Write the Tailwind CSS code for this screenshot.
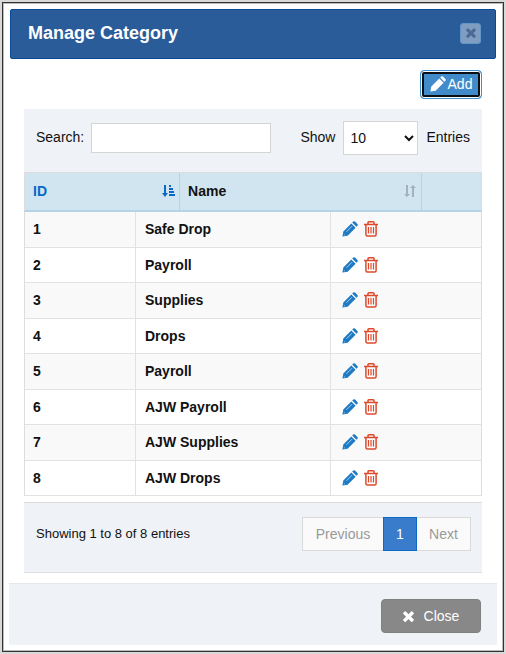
<!DOCTYPE html>
<html lang="en">
<head>
    <meta charset="UTF-8">
    <meta name="viewport" content="width=device-width, initial-scale=1.0">
    <title>Manage Category</title>
    <script src="https://cdn.jsdelivr.net/npm/@tailwindcss/browser@4"></script>
</head>
<body class="min-h-screen bg-[#d9d9d9] p-[2px] font-['Liberation_Sans',Arial,sans-serif] text-sm text-[#111]">

<!-- icon sprite -->
<svg class="hidden">
    <symbol id="pencil" viewBox="0 0 16 16">
        <path d="M.4 15.600l.9-5.200 8-8 4.300 4.300-8 8zM10.200 1.600l1-1q.9-.8 1.800 0l2.400 2.400q.8.9 0 1.800l-1 1z"/>
    </symbol>
    <symbol id="pencil-lined" viewBox="0 0 16 16">
        <path d="M.4 15.600l.9-5.200 8-8 4.300 4.300-8 8zM10.200 1.600l1-1q.9-.8 1.800 0l2.400 2.400q.8.9 0 1.800l-1 1z"/>
        <path d="M4.500 10.700l5.500-5.500M1.900 13.300l.9.900" fill="none" stroke="#b5d8f0" stroke-width=".9"/>
    </symbol>
    <symbol id="times" viewBox="302 334 1188 1220">
        <path d="M1490 1322q0 40-28 68l-136 136q-28 28-68 28t-68-28l-294-294-294 294q-28 28-68 28t-68-28l-136-136q-28-28-28-68t28-68l294-294-294-294q-28-28-28-68t28-68l136-136q28-28 68-28t68 28l294 294 294-294q28-28 68-28t68 28l136 136q28 28 28 68t-28 68l-294 294 294 294q28 28 28 68z"/>
    </symbol>
    <symbol id="trash" viewBox="0 0 14 16">
        <path d="M0 3.500h14M4 3V1.500Q4 .8 4.800 .8h4.400q.8 0 .8.8V3M1.900 3.500v10q0 1.500 1.500 1.500h7.200q1.500 0 1.500-1.500v-10" fill="none" stroke="currentColor" stroke-width="1.500"/>
        <path d="M4.500 6v6.500M7 6v6.500M9.500 6v6.500" fill="none" stroke="currentColor" stroke-width="1.200"/>
    </symbol>
</svg>

<main class="border border-[#333] bg-white px-[6px] pt-[6px] pb-[6px] shadow-[inset_0_0_0_1px_#bbb]">
    <header class="mx-px flex h-[50px] items-center justify-between rounded-xs border border-[#0a4a9a] bg-[#295c99] pr-[14px] pb-[2px] pl-[17px]">
        <h1 class="text-lg font-bold text-white">Manage Category</h1>
        <button type="button" aria-label="Close dialog" class="flex size-[21px] items-center justify-center rounded-[3px] border border-[#6396c8] bg-[#7f9dc1] text-[#486a94]">
            <svg class="size-[10px]" fill="currentColor"><use href="#times"/></svg>
        </button>
    </header>

    <div class="px-[15px]">
        <div class="flex justify-end pt-[11px] pb-[10px]">
            <button type="button" class="flex h-[29px] w-[62px] items-center justify-center gap-[2px] rounded-[4px] border border-[#3f8fd0] bg-[#428bca] pb-px text-white shadow-[inset_0_0_0_1px_#fff,inset_0_0_0_3px_#0b0f14]">
                <svg class="size-4" fill="currentColor"><use href="#pencil"/></svg>
                Add
            </button>
        </div>

        <div class="flex h-[63px] items-center justify-between bg-[#eff2f7] px-3 pb-[6px]">
            <div class="flex items-center gap-[7px]">
                <label for="search" class="pb-[2px]">Search:</label>
                <input id="search" type="text" class="h-[30px] w-[180px] border border-[#d5d5d5] bg-white px-2">
            </div>
            <div class="flex items-center gap-2">
                <label for="length" class="pb-[2px]">Show</label>
                <select id="length" class="h-[34px] w-[75px] border border-[#d5d5d5] bg-white px-[2px]">
                    <option>10</option>
                    <option>25</option>
                    <option>50</option>
                    <option>100</option>
                </select>
                <span class="pb-[2px]">Entries</span>
            </div>
        </div>

        <table class="w-full table-fixed border border-t-[#ddd] border-r-[#ddd] border-b-[#b4d3e5] border-l-[#ddd] border-b-2 border-separate border-spacing-0 bg-[#d1e5f0] text-left">
            <thead>
                <tr class="h-[37px]">
                    <th class="w-[34%] border-r border-[#b4d3e5] pr-1 pb-[2px] pl-2 text-[#0a68c6]">
                        <div class="flex items-center justify-between">
                            ID
                            <svg class="h-3 w-[13px]" viewBox="0 0 13 12" fill="currentColor">
                                <path d="M2 0h2v8h2l-3 4-3-4h2zM7 0h2v2H7zM7 3h4v2H7zM7 6h5v2H7zM7 9h6v2H7z"/>
                            </svg>
                        </div>
                    </th>
                    <th class="w-[53%] border-r border-[#b4d3e5] pr-1 pb-[2px] pl-2">
                        <div class="flex items-center justify-between">
                            Name
                            <svg class="h-3 w-[13px] text-[#9fb2bd]" viewBox="0 0 13 12" fill="currentColor">
                                <path d="M2 0h2v9h2l-3 3-3-3h2zM8 12h2V3h2L9 0 6 3h2z"/>
                            </svg>
                        </div>
                    </th>
                    <th aria-label="Actions"></th>
                </tr>
            </thead>
        </table>

        <table class="w-full table-fixed border-separate border-spacing-0 border-x border-[#ddd] font-bold">
            <colgroup>
                <col class="w-[111px]">
                <col class="w-[195px]">
                <col>
            </colgroup>
            <tbody id="rows"></tbody>
        </table>

        <div class="mt-[6px] flex h-[71px] items-start justify-between border-y border-[#ddd] bg-[#eff2f7] pt-[14px] pr-[11px] pl-3">
            <p class="py-[7px] text-[13px] leading-5">Showing 1 to 8 of 8 entries</p>
            <nav class="flex h-[34px] text-[#999]">
                <button type="button" class="w-[81px] border border-r-0 border-[#d9d9d9] bg-[#fafafa]">Previous</button>
                <button type="button" class="w-[34px] border border-[#0a68c6] bg-[#387ccb] text-white">1</button>
                <button type="button" class="w-[54px] border border-l-0 border-[#d9d9d9] bg-[#fafafa]">Next</button>
            </nav>
        </div>
    </div>

    <footer class="mt-[10px] flex justify-end border-t border-[#e4e9ee] bg-[#eff2f7] pt-[15px] pr-4 pb-3">
        <button type="button" class="flex h-[34px] w-[100px] items-center justify-center gap-[10px] rounded-[4px] border border-[#808080] bg-[#888] text-white">
            <svg class="size-[11px]" fill="currentColor"><use href="#times"/></svg>
            Close
        </button>
    </footer>
</main>

<script>
    const categories = ['Safe Drop', 'Payroll', 'Supplies', 'Drops', 'Payroll', 'AJW Payroll', 'AJW Supplies', 'AJW Drops'];

    document.getElementById('rows').innerHTML = categories.map((name, i) => `
        <tr class="odd:h-9 even:h-[35px] odd:bg-[#f9f9f9]">
            <td class="border-r border-b border-[#e2e2e2] pb-px pl-2">${i + 1}</td>
            <td class="border-r border-b border-[#e2e2e2] pb-px pl-[9px]">${name}</td>
            <td class="border-b border-[#e2e2e2] pb-px pl-[11px]">
                <div class="flex items-center gap-[6px]">
                    <button type="button" aria-label="Edit ${name}" class="text-[#1f7ac4]"><svg class="size-4" fill="currentColor"><use href="#pencil-lined"/></svg></button>
                    <button type="button" aria-label="Delete ${name}" class="text-[#dd4a2c]"><svg class="h-4 w-[14px]"><use href="#trash"/></svg></button>
                </div>
            </td>
        </tr>`).join('');
</script>

</body>
</html>
